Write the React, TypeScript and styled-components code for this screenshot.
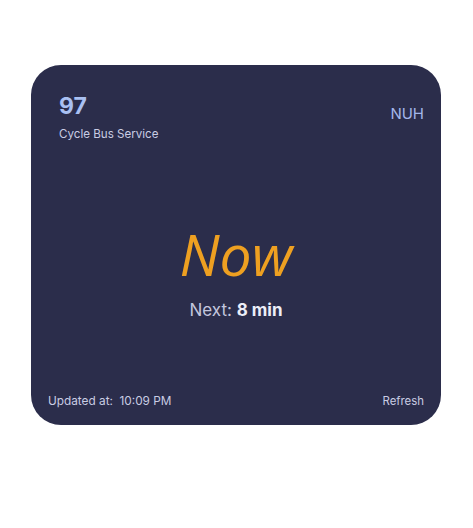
import React from "react";
import styled, { createGlobalStyle } from "styled-components";

const Global = createGlobalStyle`
  html, body { margin: 0; padding: 0; background: #ffffff; }
  body { font-family: Inter, "Noto Sans", sans-serif; }
`;

const Page = styled.div`
  width: 473px;
  height: 528px;
  padding: 65px 0 0 31px;
  box-sizing: border-box;
`;

const Card = styled.div`
  width: 410px;
  height: 360px;
  box-sizing: border-box;
  background: #2b2d4b;
  border-radius: 30px;
  padding: 0 17px 16px 17px;
  display: flex;
  flex-direction: column;
  font-family: Inter, "Noto Sans", sans-serif;
`;

const Header = styled.div`
  display: flex;
  justify-content: space-between;
  align-items: flex-start;
`;

const RouteBlock = styled.div`
  padding: 27px 11px 0 11px;
  display: flex;
  flex-direction: column;
`;

const RouteNumber = styled.div`
  font-size: 23px;
  font-weight: 700;
  line-height: 28px;
  color: #a9c0f2;
`;

const RouteName = styled.div`
  margin-top: 6px;
  font-size: 11.6px;
  line-height: 16px;
  color: #c9cce3;
`;

const Stop = styled.div`
  margin-top: 40px;
  font-size: 15px;
  line-height: 18px;
  color: #a3b6ea;
`;

const Center = styled.div`
  flex: 1;
  display: flex;
  flex-direction: column;
  align-items: center;
  justify-content: center;
  padding-top: 6px;
`;

const Eta = styled.div`
  font-family: "Open Sans", sans-serif;
  font-style: italic;
  font-size: 57px;
  line-height: 64px;
  color: #eea021;
`;

const Next = styled.div`
  margin-top: 14px;
  font-size: 17px;
  line-height: 20px;
  color: #c3c6de;
`;

const NextValue = styled.span`
  font-weight: 700;
  color: #eceef8;
`;

const Footer = styled.div`
  display: flex;
  justify-content: space-between;
  align-items: center;
`;

const FooterText = styled.div`
  font-size: 11.8px;
  line-height: 16px;
  color: #c9cce3;
  white-space: pre;
`;

const RefreshText = styled(FooterText)`
  font-size: 11.4px;
`;

export default function App() {
  return (
    <>
      <Global />
      <Page>
        <Card>
          <Header>
            <RouteBlock>
              <RouteNumber>97</RouteNumber>
              <RouteName>Cycle Bus Service</RouteName>
            </RouteBlock>
            <Stop>NUH</Stop>
          </Header>
          <Center>
            <Eta>Now</Eta>
            <Next>
              Next: <NextValue>8 min</NextValue>
            </Next>
          </Center>
          <Footer>
            <FooterText>{"Updated at:  10:09 PM"}</FooterText>
            <RefreshText>Refresh</RefreshText>
          </Footer>
        </Card>
      </Page>
    </>
  );
}
